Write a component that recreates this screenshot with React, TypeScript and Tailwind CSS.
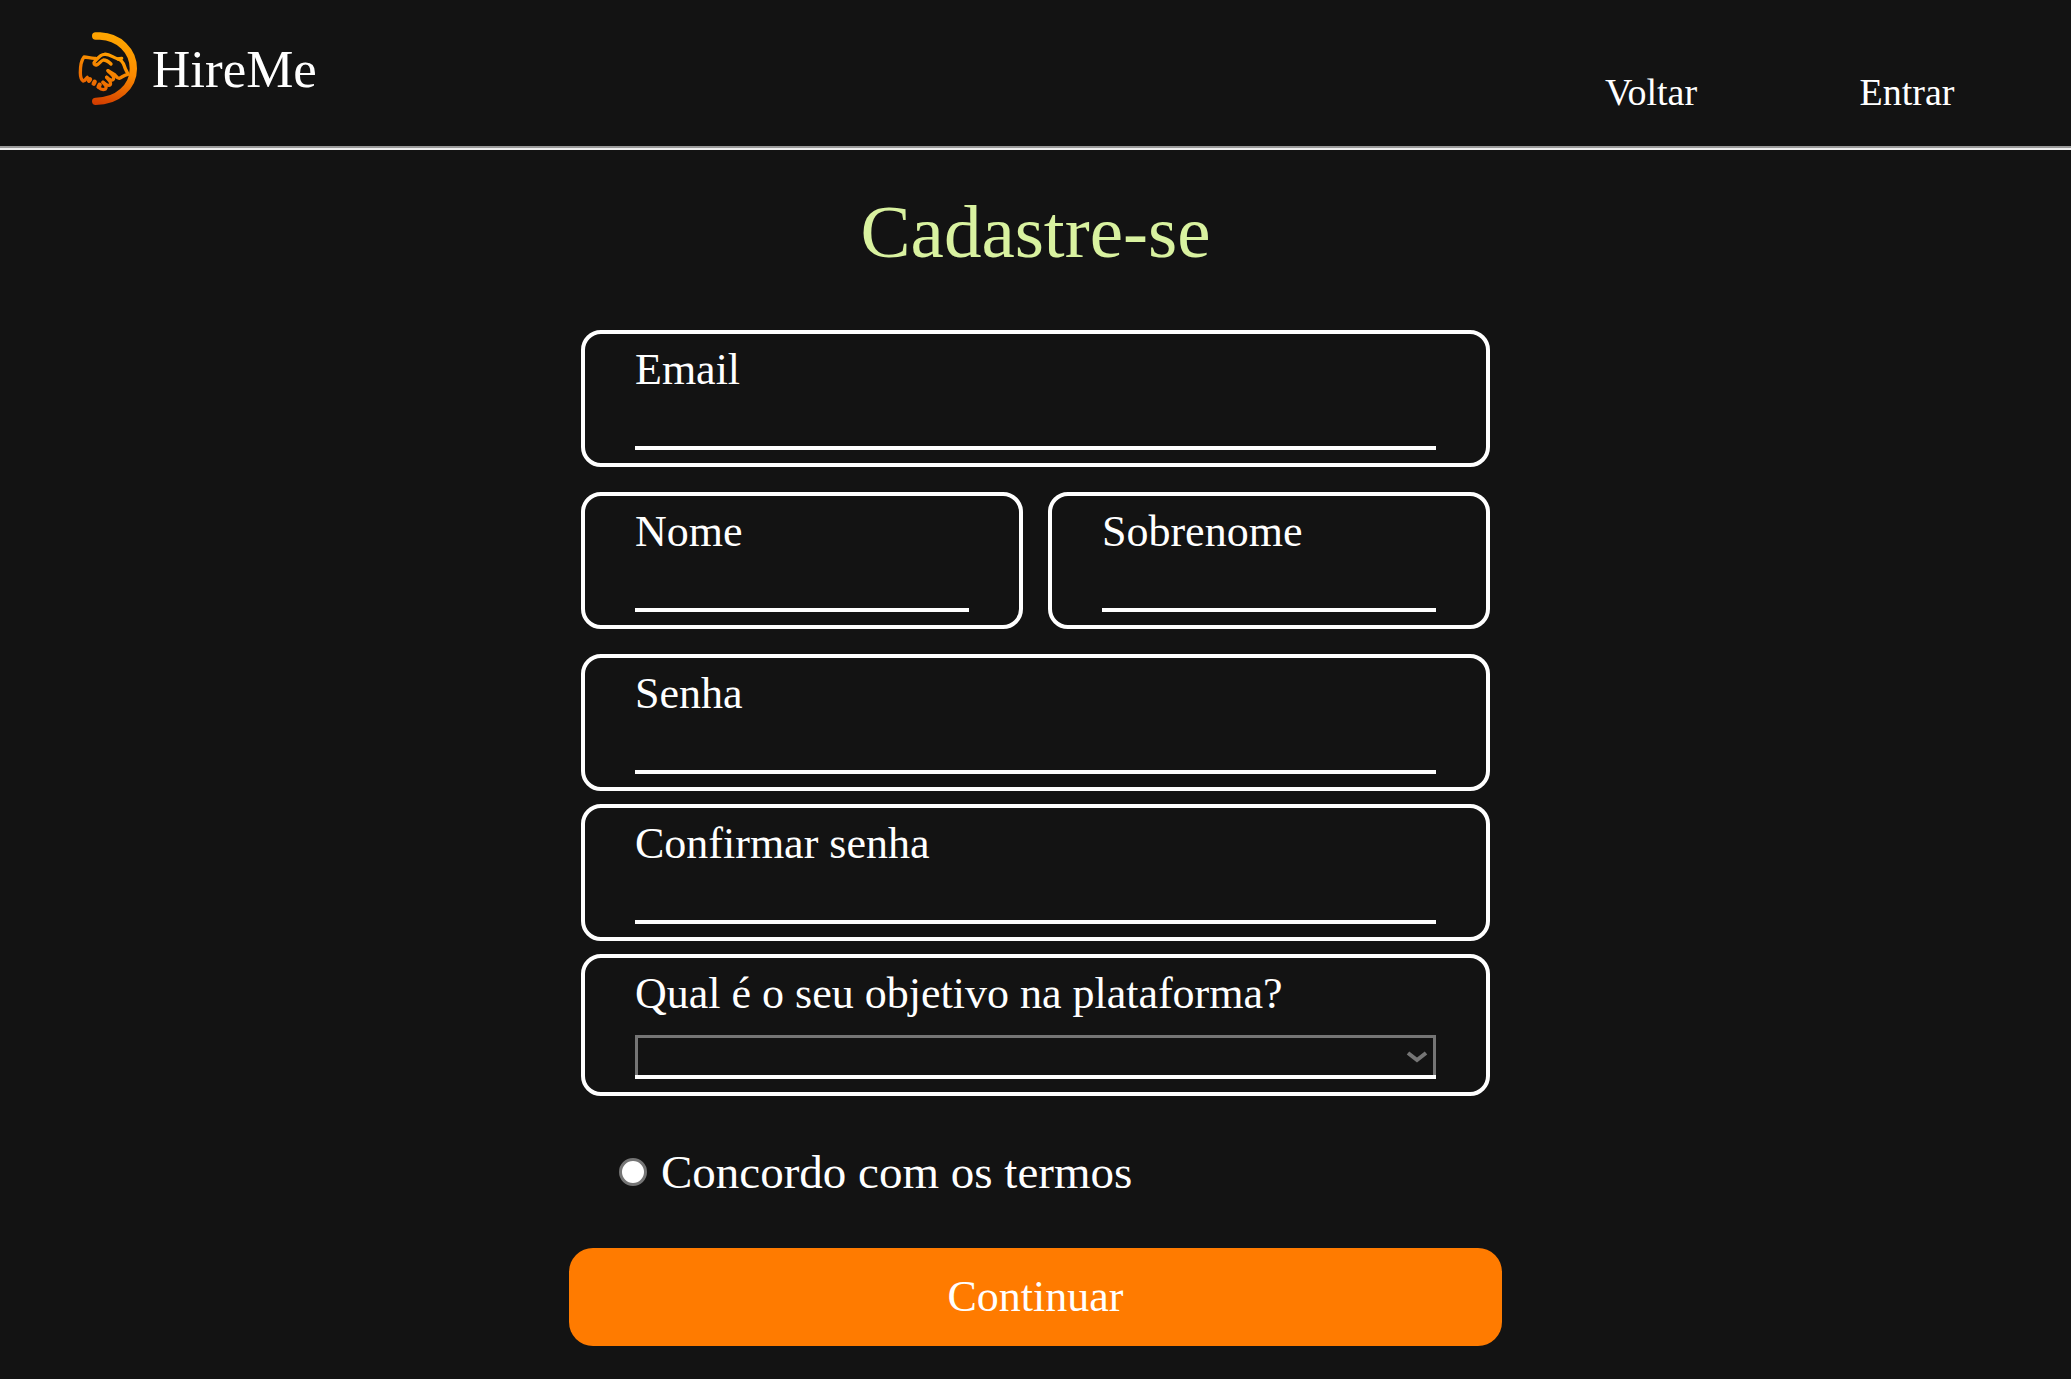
import { useId } from "react";

function Logo() {
  return (
    <svg className="h-[75px] w-[60px] shrink-0" viewBox="24 21 180 225" fill="none" aria-hidden="true">
      <defs>
        <linearGradient id="flame" gradientUnits="userSpaceOnUse" x1="130" y1="25" x2="75" y2="240">
          <stop offset="0" stopColor="#ffa800" />
          <stop offset="0.5" stopColor="#fb8a00" />
          <stop offset="1" stopColor="#d23c00" />
        </linearGradient>
        <linearGradient id="hands" gradientUnits="userSpaceOnUse" x1="120" y1="85" x2="70" y2="200">
          <stop offset="0" stopColor="#ffa000" />
          <stop offset="1" stopColor="#e86000" />
        </linearGradient>
      </defs>
      <path d="M77 36 H90 C146 38 190 80 190 134 C190 188 142 232 77 232" stroke="url(#flame)" strokeWidth="22" strokeLinecap="round" />
      <g stroke="url(#hands)" strokeWidth="10" strokeLinecap="round" strokeLinejoin="round">
        <path d="M77 103 C62 104 54 99 42 99 C33 110 31 128 31 146 C31 158 35 168 40 171 C46 169 48 164 52 160" />
        <path d="M123 120 C115 112 108 108 100 108 C92 110 88 121 79 123 C72 124 70 117 74 113 C83 103 91 91 103 91 C117 88 129 101 144 105 C156 108 160 117 163 126 C166 137 171 142 174 151 C164 152 158 158 148 163 C142 164 139 157 134 152 L114 140" />
        <path d="M114 140 C120 148 133 154 131 163 C130 171 121 170 110 160" />
        <path d="M110 160 C117 168 125 176 121 182 C115 189 107 181 99 175" />
        <path d="M99 175 C105 183 113 188 106 195 C99 199 91 195 85 190" />
        <path d="M144 105 L155 103" />
      </g>
      <g stroke="url(#hands)" strokeWidth="13" strokeLinecap="round">
        <path d="M60 166 L57 170" />
        <path d="M74 173 L71 179" />
        <path d="M89 182 L86 188" />
      </g>
    </svg>
  );
}

const box = "flex min-w-0 flex-1 flex-col rounded-[20px] border-4 border-white px-[50px] pt-3 pb-[13px]";
const labelText = "text-[44px] leading-[48px] whitespace-nowrap";

function Field({ label, type = "text" }: { label: string; type?: string }) {
  const id = useId();
  return (
    <div className={box}>
      <label htmlFor={id} className={labelText}>{label}</label>
      <input id={id} type={type} className="h-14 w-full border-b-4 border-white bg-transparent text-3xl outline-none" />
    </div>
  );
}

function GoalField() {
  const id = useId();
  return (
    <div className={box}>
      <label htmlFor={id} className={labelText}>Qual é o seu objetivo na plataforma?</label>
      <div className="relative mt-[17px] border-b-4 border-white">
        <select
          id={id}
          defaultValue=""
          className="block h-10 w-full appearance-none rounded-none border-3 border-b-0 border-[#757575] bg-[#131313] px-3 text-2xl outline-none"
        >
          <option value=""></option>
          <option value="contratar">Contratar</option>
          <option value="trabalhar">Trabalhar</option>
        </select>
        <svg className="pointer-events-none absolute top-4 right-2 h-[14px] w-[22px]" viewBox="0 0 22 14" fill="none" aria-hidden="true">
          <path d="M2 2 L11 9 L20 2" stroke="#757575" strokeWidth="4" />
        </svg>
      </div>
    </div>
  );
}

export default function App() {
  return (
    <div className="min-h-screen bg-[#131313] font-['Liberation_Serif',serif] text-white">
      <header className="border-b-2 border-[#eeeeee]">
        <div className="flex items-start justify-between border-b-2 border-[#9a9a9a] pt-[31px] pr-9 pb-[33px] pl-[78px]">
          <a href="#" className="flex items-center gap-3.5">
            <Logo />
            <span className="text-[53px] leading-[58px]">HireMe</span>
          </a>
          <nav className="mt-10 flex text-[38px] leading-[42px]">
            <a href="#" className="w-64 text-center">Voltar</a>
            <a href="#" className="w-64 text-center">Entrar</a>
          </nav>
        </div>
      </header>
      <main className="mx-auto max-w-[933px]">
        <h1 className="mt-[42px] mb-[58px] text-center text-[75px] leading-[80px] text-[#d9f2a0]">Cadastre-se</h1>
        <form onSubmit={(e) => e.preventDefault()}>
          <div className="flex flex-col gap-[13px] px-3">
            <div className="mb-3 flex">
              <Field label="Email" type="email" />
            </div>
            <div className="mb-3 flex gap-[25px]">
              <Field label="Nome" />
              <Field label="Sobrenome" />
            </div>
            <Field label="Senha" type="password" />
            <Field label="Confirmar senha" type="password" />
            <GoalField />
          </div>
          <label className="mt-12 ml-[50px] flex w-fit items-center gap-3.5 text-[47px] leading-[56px]">
            <input type="radio" name="termos" className="size-7 appearance-none rounded-full border-3 border-[#757575] bg-white checked:bg-[#ff7b00]" />
            Concordo com os termos
          </label>
          <button type="submit" className="mt-12 mb-8 block h-[98px] w-full rounded-3xl bg-[#ff7b00] text-[44px] leading-[48px]">
            Continuar
          </button>
        </form>
      </main>
    </div>
  );
}
